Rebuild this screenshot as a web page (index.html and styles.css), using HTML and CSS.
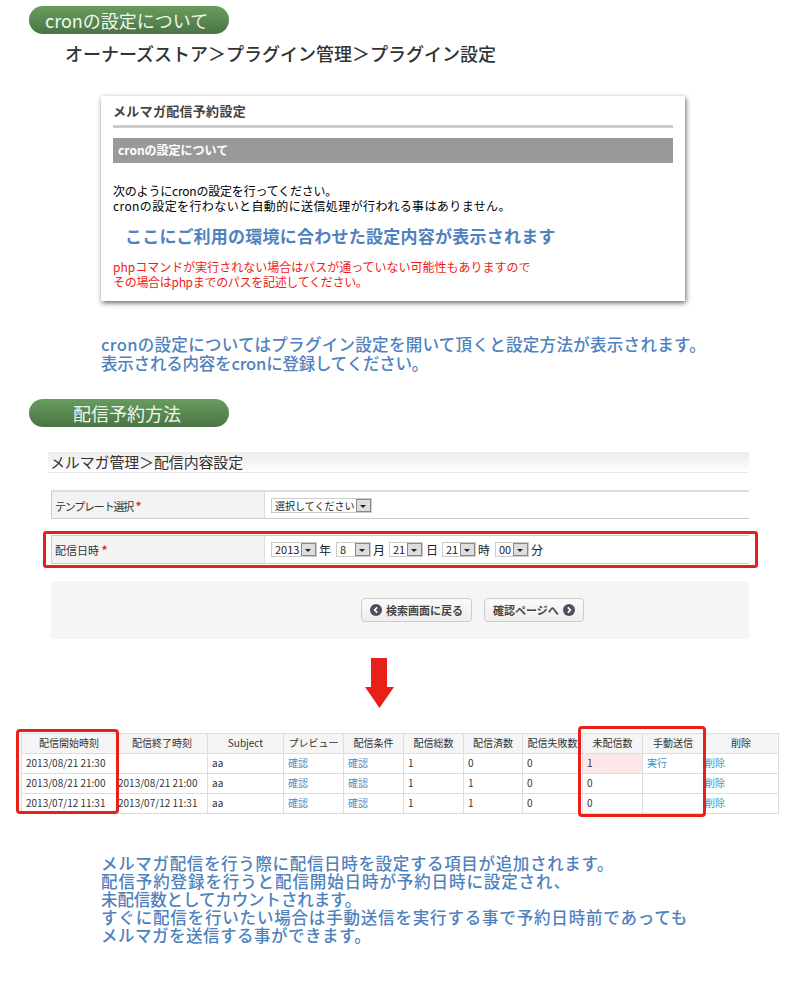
FILE: index.html
```html
<!DOCTYPE html>
<html lang="ja">
<head>
  <meta charset="UTF-8">
  <title>メルマガ配信予約設定</title>
  <link rel="stylesheet" href="styles.css">
</head>
<body>
  <div class="page">
    <h2 class="pill pill-cron">cronの設定について</h2>
    <p class="crumb">オーナーズストア＞プラグイン管理＞プラグイン設定</p>

    <div class="card">
      <h3 class="card-title">メルマガ配信予約設定</h3>
      <div class="card-bar">cronの設定について</div>
      <p class="card-text"><span class="line ct1">次のようにcronの設定を行ってください。</span><span class="line ct2">cronの設定を行わないと自動的に送信処理が行われる事はありません。</span></p>
      <p class="card-note">ここにご利用の環境に合わせた設定内容が表示されます</p>
      <p class="card-warn"><span class="line">phpコマンドが実行されない場合はパスが通っていない可能性もありますので</span><span class="line cw2">その場合はphpまでのパスを記述してください。</span></p>
    </div>

    <p class="lead lead-cron"><span class="line lc1">cronの設定についてはプラグイン設定を開いて頂くと設定方法が表示されます。</span><span class="line lc2">表示される内容をcronに登録してください。</span></p>

    <h2 class="pill pill-plan">配信予約方法</h2>

    <div class="head-bar">メルマガ管理＞配信内容設定</div>

    <div class="form-row form-row-first">
      <div class="form-label"><span class="label-tight">テンプレート選択</span> <span class="req">*</span></div>
      <div class="form-field">
        <span class="sel sel-template"><span class="sel-val">選択してください</span><span class="sel-btn"></span></span>
      </div>
    </div>

    <div class="highlight-row">
      <div class="form-row">
        <div class="form-label">配信日時 <span class="req">*</span></div>
        <div class="form-field">
          <span class="sel sel-year"><span class="sel-val">2013</span><span class="sel-btn"></span></span>
          <span class="unit unit-year">年</span>
          <span class="sel sel-month"><span class="sel-val">8</span><span class="sel-btn"></span></span>
          <span class="unit unit-month">月</span>
          <span class="sel sel-num"><span class="sel-val">21</span><span class="sel-btn"></span></span>
          <span class="unit unit-day">日</span>
          <span class="sel sel-num"><span class="sel-val">21</span><span class="sel-btn"></span></span>
          <span class="unit unit-hour">時</span>
          <span class="sel sel-num"><span class="sel-val">00</span><span class="sel-btn"></span></span>
          <span class="unit">分</span>
        </div>
      </div>
    </div>

    <div class="actions">
      <a class="btn btn-back">
        <svg class="btn-icon" viewBox="0 0 12 12"><circle cx="6" cy="6" r="6" fill="#4b4f63"/><path d="M7.2 3.4 4.6 6l2.6 2.6" fill="none" stroke="#fff" stroke-width="1.7"/></svg>
        検索画面に戻る
      </a>
      <a class="btn btn-next">
        確認ページへ
        <svg class="btn-icon" viewBox="0 0 12 12"><circle cx="6" cy="6" r="6" fill="#4b4f63"/><path d="M4.8 3.4 7.4 6 4.8 8.6" fill="none" stroke="#fff" stroke-width="1.7"/></svg>
      </a>
    </div>

    <svg class="down-arrow" viewBox="0 0 29 50"><path d="M6 0h16v29h7L14.500 50 0 29h6z" fill="#e8201a"/></svg>

    <div class="table-wrap">
      <table class="list">
        <colgroup>
          <col class="c1"><col class="c2"><col class="c3"><col class="c4"><col class="c5">
          <col class="c6"><col class="c7"><col class="c8"><col class="c9"><col class="c10"><col class="c11">
        </colgroup>
        <thead>
          <tr><th>配信開始時刻</th><th>配信終了時刻</th><th>Subject</th><th>プレビュー</th><th>配信条件</th><th>配信総数</th><th>配信済数</th><th>配信失敗数</th><th>未配信数</th><th>手動送信</th><th>削除</th></tr>
        </thead>
        <tbody>
          <tr><td>2013/08/21 21:30</td><td class="tight"></td><td>aa</td><td><a>確認</a></td><td><a>確認</a></td><td>1</td><td>0</td><td>0</td><td class="pink">1</td><td><a>実行</a></td><td class="tight"><a>削除</a></td></tr>
          <tr><td>2013/08/21 21:00</td><td class="tight">2013/08/21 21:00</td><td>aa</td><td><a>確認</a></td><td><a>確認</a></td><td>1</td><td>1</td><td>0</td><td>0</td><td></td><td class="tight"><a>削除</a></td></tr>
          <tr><td>2013/07/12 11:31</td><td class="tight">2013/07/12 11:31</td><td>aa</td><td><a>確認</a></td><td><a>確認</a></td><td>1</td><td>1</td><td>0</td><td>0</td><td></td><td class="tight"><a>削除</a></td></tr>
        </tbody>
      </table>
      <div class="mark mark-start"></div>
      <div class="mark mark-unsent"></div>
    </div>

    <p class="lead lead-plan"><span class="line lp1">メルマガ配信を行う際に配信日時を設定する項目が追加されます。</span><span class="line lp2">配信予約登録を行うと配信開始日時が予約日時に設定され、</span><span class="line lp3">未配信数としてカウントされます。</span><span class="line lp4">すぐに配信を行いたい場合は手動送信を実行する事で予約日時前であっても</span><span class="line lp5">メルマガを送信する事ができます。</span></p>
  </div>
</body>
</html>
```

FILE: styles.css
```css
* {
  margin: 0;
  padding: 0;
  box-sizing: border-box;
}
body {
  font-family: "Noto Sans CJK JP", "Noto Sans", sans-serif;
  background-color: white;
  color: #333;
}
.page {
  width: 798px;
  height: 1000px;
  padding-top: 6px;
  overflow: hidden;
}
.line {
  display: block;
}

/* green section headings */
.pill {
  width: 200px;
  height: 28px;
  margin-left: 29px;
  border-radius: 14px;
  background: linear-gradient(#689c5e, #4a7545);
  color: #f2f5ee;
  font-size: 18px;
  font-weight: 400;
  line-height: 28px;
  white-space: nowrap;
}
.pill-cron {
  padding-left: 16px;
}
.pill-plan {
  margin-top: 26px;
  padding-left: 44px;
}
.crumb {
  margin: 6px 0 0 65px;
  font-size: 18px;
  font-weight: 500;
  line-height: 26px;
  color: #333;
}

/* cron settings card */
.card {
  width: 584px;
  height: 205px;
  margin: 30px 0 0 101px;
  padding: 6px 12px 0;
  background-color: white;
  box-shadow: 1px 2px 5px rgba(0, 0, 0, 0.6);
}
.card-title {
  height: 26px;
  border-bottom: 3px solid #ccc;
  font-size: 13px;
  font-weight: 700;
  line-height: 18px;
  letter-spacing: 0.3px;
  color: #444;
}
.card-bar {
  height: 25px;
  margin-top: 10px;
  padding-left: 5px;
  background-color: #999;
  color: white;
  font-size: 12px;
  font-weight: 700;
  line-height: 24px;
}
.card-text {
  margin-top: 20px;
  font-size: 12px;
  line-height: 15px;
  color: black;
  white-space: nowrap;
}
.ct1 {
  letter-spacing: -0.2px;
}
.ct2 {
  letter-spacing: 0.4px;
}
.card-note {
  margin: 12px 0 0 12px;
  font-size: 17px;
  font-weight: 700;
  line-height: 22px;
  letter-spacing: 0.24px;
  color: #4f82bd;
  white-space: nowrap;
}
.card-warn {
  margin-top: 12px;
  font-size: 12px;
  line-height: 15px;
  color: #f01a14;
  white-space: nowrap;
}
.cw2 {
  letter-spacing: -0.3px;
}

/* blue explanations */
.lead {
  margin-left: 101px;
  font-size: 16.500px;
  font-weight: 500;
  color: #4f82bd;
  white-space: nowrap;
}
.lead-cron {
  margin-top: 34px;
  line-height: 19px;
}
.lead-plan {
  margin-top: 40px;
  line-height: 18px;
}
.lc1 {
  letter-spacing: 0.3px;
}
.lc2 {
  letter-spacing: -0.2px;
}
.lp1 {
  letter-spacing: 0.66px;
}
.lp2 {
  letter-spacing: 0.9px;
}
.lp3 {
  letter-spacing: -0.1px;
}
.lp4 {
  letter-spacing: 0.82px;
}
.lp5 {
  letter-spacing: 0.5px;
}

/* mail magazine form */
.head-bar {
  width: 701px;
  height: 21px;
  margin: 25px 0 0 48px;
  padding-left: 2px;
  border-bottom: 1px solid #e6e6ec;
  background: linear-gradient(#ececec, white);
  font-size: 15px;
  line-height: 19px;
  letter-spacing: -0.15px;
  color: #333;
}
.form-row {
  display: flex;
  width: 698px;
  height: 29px;
  border-top: 1px solid #ccc;
  border-bottom: 1px solid #ccc;
}
.form-row-first {
  margin: 17px 0 0 51px;
  border-top: 2px solid #ddd;
}
.form-label {
  width: 214px;
  padding-left: 3px;
  border-left: 1px solid #ccc;
  border-right: 1px solid #ddd;
  background-color: #f3f3f3;
  font-size: 11px;
  line-height: 27px;
  color: #333;
}
.label-tight {
  letter-spacing: -1.2px;
}
.req {
  font-size: 12px;
  font-weight: 700;
  color: #e8301a;
}
.form-field {
  display: flex;
  flex: 1;
  align-items: center;
  padding-left: 6px;
  font-size: 11px;
  color: #222;
}
.highlight-row {
  width: 715px;
  height: 37px;
  margin: 12px 0 0 43px;
  padding: 1px 0 0 5px;
  border: 3px solid #e8201a;
  border-radius: 3px;
}
.sel {
  display: flex;
  align-items: center;
  height: 15px;
  padding: 0 0 0 3px;
  border: 1px solid #ccc;
  font-size: 11px;
  line-height: 13px;
  color: #222;
  white-space: nowrap;
}
.sel-val {
  flex: 1;
}
.sel-btn {
  position: relative;
  width: 15px;
  height: 13px;
  border: 1px solid #888;
  background-color: #ddd;
}
.sel-btn::after {
  content: "";
  position: absolute;
  left: 3px;
  top: 5px;
  border: 3px solid transparent;
  border-top: 3px solid #222;
}
.sel-template {
  width: 101px;
  font-size: 10px;
}
.sel-year {
  width: 46px;
}
.sel-month {
  width: 35px;
}
.sel-num {
  width: 34px;
}
.unit {
  width: 12px;
  margin-left: 2px;
  font-size: 12px;
}
.unit-year {
  margin-right: 5px;
}
.unit-month {
  margin-right: 4px;
}
.unit-day {
  margin: 0 4px 0 3px;
}
.unit-hour {
  margin-right: 5px;
}
.actions {
  display: flex;
  gap: 12px;
  width: 698px;
  height: 58px;
  margin: 13px 0 0 51px;
  padding: 17px 0 0 310px;
  background-color: #f5f5f5;
}
.btn {
  display: flex;
  align-items: center;
  gap: 4px;
  height: 24px;
  padding: 0 8px;
  border: 1px solid #ccc;
  border-radius: 4px;
  background: linear-gradient(#fafafa, #eee);
  font-size: 11px;
  font-weight: 700;
  color: #444;
  white-space: nowrap;
}
.btn-icon {
  width: 12px;
  height: 12px;
}
.down-arrow {
  display: block;
  width: 29px;
  height: 50px;
  margin: 19px 0 0 365px;
}

/* delivery list */
.table-wrap {
  position: relative;
  width: 757px;
  margin: 25px 0 0 21px;
}
.list {
  width: 757px;
  border-collapse: collapse;
  table-layout: fixed;
  font-size: 10px;
  color: #333;
}
.list th,
.list td {
  height: 20px;
  padding-bottom: 2px;
  border: 1px solid #ddd;
  overflow: hidden;
  white-space: nowrap;
}
.list th {
  background-color: #f5f5f5;
  font-weight: 400;
  text-align: center;
}
.list td {
  padding-left: 4px;
}
.list td.tight {
  padding-left: 1px;
}
.list td.pink {
  background-color: #fde6e6;
}
.list a {
  color: #4d8fc4;
}
.c1 {
  width: 95px;
}
.c2 {
  width: 91px;
}
.c3 {
  width: 76px;
}
.c4,
.c5,
.c6,
.c9 {
  width: 60px;
}
.c7 {
  width: 59px;
}
.c8 {
  width: 60px;
}
.c10 {
  width: 61px;
}
.c11 {
  width: 75px;
}
.mark {
  position: absolute;
  border: 3px solid #e8201a;
  border-radius: 4px;
}
.mark-start {
  left: -5px;
  top: -4px;
  width: 103px;
  height: 85px;
}
.mark-unsent {
  left: 557px;
  top: -7px;
  width: 128px;
  height: 91px;
}
```
